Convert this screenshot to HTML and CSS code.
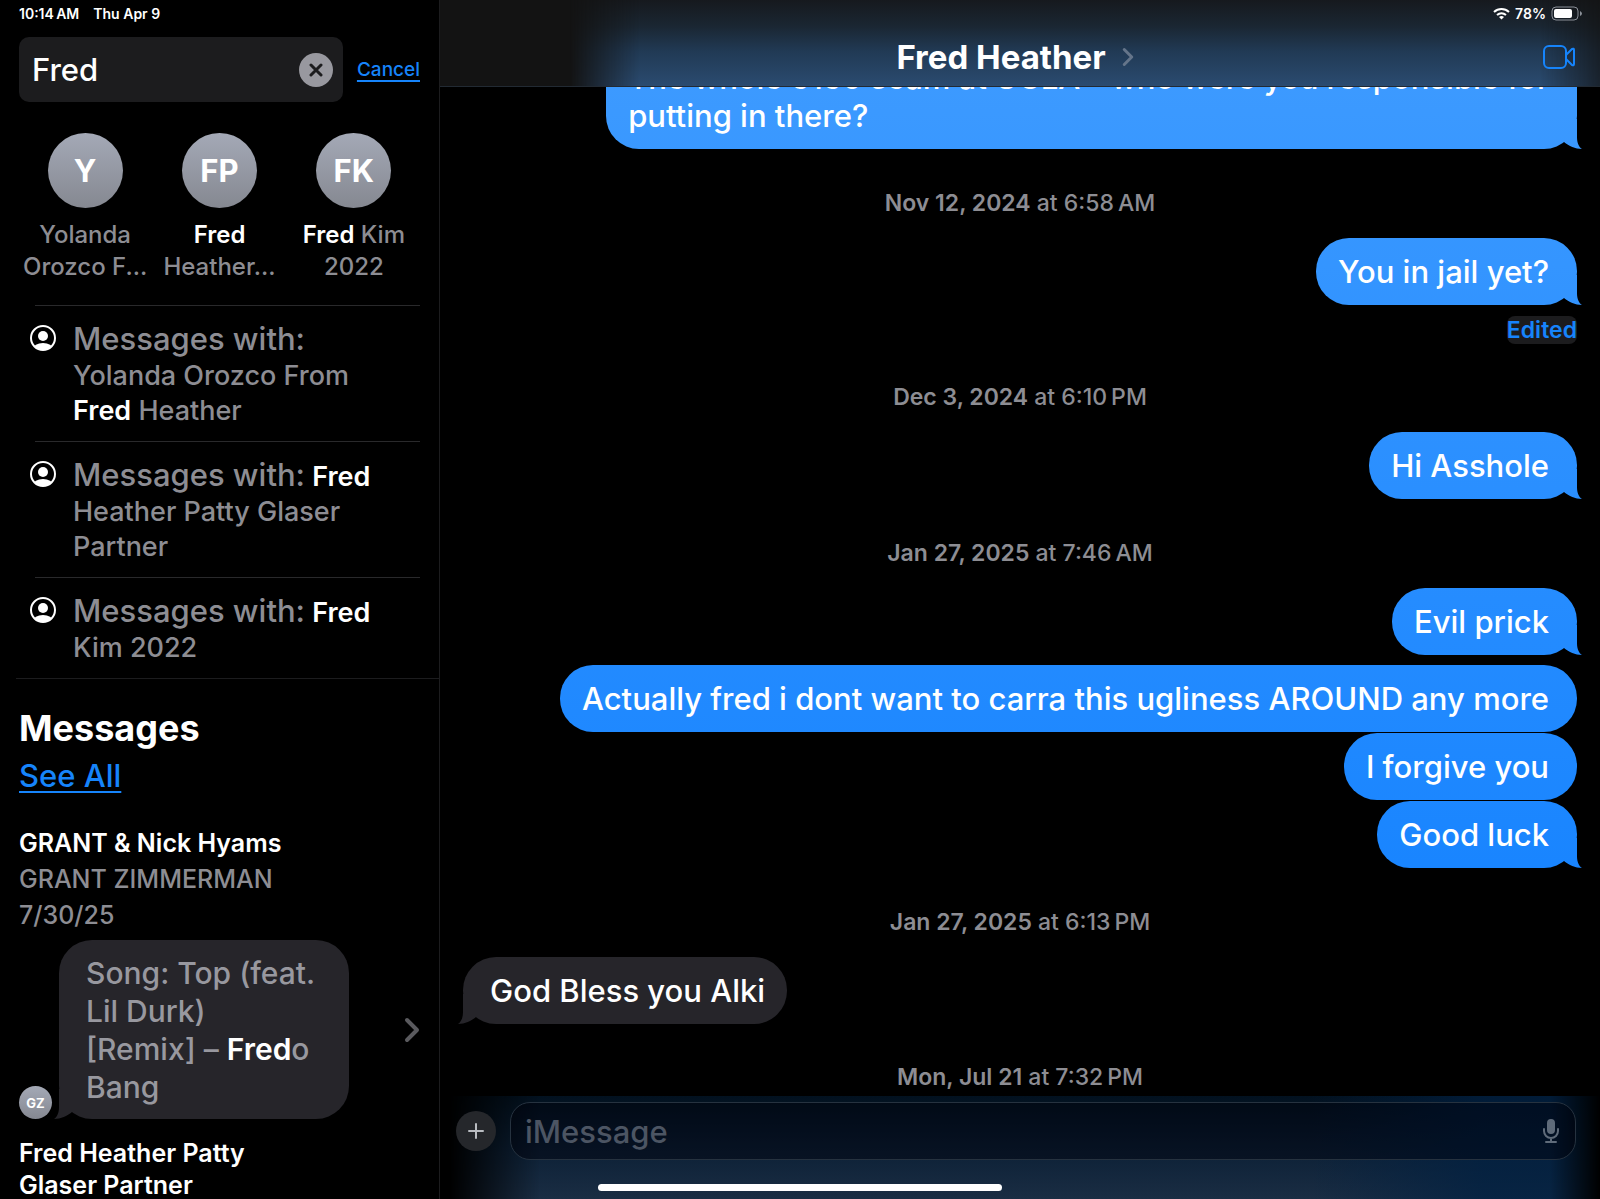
FILE: index.html
```html
<!DOCTYPE html>
<html lang="en">

<head>
    <meta charset="utf-8">
    <title>Messages</title>
    <link rel="stylesheet" href="styles.css">
</head>

<body>
    <!-- shared icons -->
    <svg class="sprite" aria-hidden="true">
        <symbol id="person" viewBox="0 0 26 26">
            <clipPath id="personClip"><circle cx="13" cy="13" r="12" /></clipPath>
            <circle cx="13" cy="13" r="12" fill="none" stroke="currentColor" stroke-width="2" />
            <circle cx="13" cy="11" r="5" fill="currentColor" />
            <ellipse cx="13" cy="24" rx="10" ry="6" fill="currentColor" clip-path="url(#personClip)" />
        </symbol>
        <symbol id="chevron" viewBox="0 0 16 26">
            <path d="M3 3l10 10L3 23" fill="none" stroke="currentColor" stroke-width="4" stroke-linecap="round" stroke-linejoin="round" />
        </symbol>
    </svg>

    <aside class="sidebar">
        <div class="status-bar">
            <span>10:14&thinsp;AM</span>
            <span>Thu Apr 9</span>
        </div>

        <form class="search">
            <div class="search-box">
                <input type="text" class="search-input" value="Fred" aria-label="Search">
                <button type="button" class="clear" aria-label="Clear">
                    <svg width="14" height="14" viewBox="0 0 14 14">
                        <path d="M2 2l10 10M12 2L2 12" stroke="#1c1c1e" stroke-width="3" stroke-linecap="round" />
                    </svg>
                </button>
            </div>
            <a href="#" class="cancel">Cancel</a>
        </form>

        <div class="contacts">
            <div class="contact">
                <div class="avatar">Y</div>
                <p>Yolanda<br>Orozco F...</p>
            </div>
            <div class="contact">
                <div class="avatar">FP</div>
                <p><b>Fred</b><br>Heather...</p>
            </div>
            <div class="contact">
                <div class="avatar">FK</div>
                <p><b>Fred</b> Kim<br>2022</p>
            </div>
        </div>

        <ul class="suggestions">
            <li>
                <svg class="person"><use href="#person" /></svg>
                <p><span class="lead">Messages with:</span><br>Yolanda Orozco From<br><b>Fred</b> Heather</p>
            </li>
            <li>
                <svg class="person"><use href="#person" /></svg>
                <p><span class="lead">Messages with:</span> <b>Fred</b><br>Heather Patty Glaser<br>Partner</p>
            </li>
            <li>
                <svg class="person"><use href="#person" /></svg>
                <p><span class="lead">Messages with:</span> <b>Fred</b><br>Kim 2022</p>
            </li>
        </ul>

        <section class="results">
            <h2>Messages</h2>
            <a href="#" class="see-all">See All</a>

            <article class="result">
                <h3>GRANT &amp; Nick Hyams</h3>
                <p>GRANT ZIMMERMAN</p>
                <p>7/30/25</p>
                <div class="result-row">
                    <div class="avatar small">GZ</div>
                    <div class="bubble received preview">Song: Top (feat.<br>Lil Durk)<br>[Remix] – <b>Fred</b>o<br>Bang</div>
                    <svg class="chevron"><use href="#chevron" /></svg>
                </div>
            </article>

            <article class="result">
                <h3>Fred Heather Patty<br>Glaser Partner</h3>
            </article>
        </section>
    </aside>

    <main class="chat">
        <header class="chat-header">
            <div class="status-bar right">
                <svg width="17" height="13" viewBox="0 0 17 13" fill="none" stroke="#fff" stroke-width="2">
                    <path d="M1 5a11 11 0 0 1 15 0" />
                    <path d="M4 8a7 7 0 0 1 9 0" />
                    <path d="M8.500 12.500L6 10a4 4 0 0 1 5 0z" fill="#fff" stroke="none" />
                </svg>
                <span>78%</span>
                <svg width="31" height="15" viewBox="0 0 31 15">
                    <rect x="1" y="1" width="26" height="13" rx="4" fill="none" stroke="#8b9098" />
                    <rect x="3" y="3" width="18" height="9" rx="2" fill="#fff" />
                    <path d="M29 5v5q2-1 2-2.500T29 5z" fill="#8b9098" />
                </svg>
            </div>
            <div class="title-row">
                <button type="button" class="title">
                    Fred Heather
                    <svg class="title-chevron"><use href="#chevron" /></svg>
                </button>
                <button type="button" class="video" aria-label="FaceTime">
                    <svg width="34" height="24" viewBox="0 0 34 24" fill="none" stroke="#1684fb" stroke-width="2" stroke-linejoin="round">
                        <rect x="2" y="1" width="22" height="22" rx="5" />
                        <path d="M24 10l6-6q2-1 2 1v14q0 2-2 1l-6-6" />
                    </svg>
                </button>
            </div>
        </header>

        <div class="thread">
            <div class="bubble sent tail">The whole 5150 scam at UCLA - who were you responsible for<br>putting in there?</div>
            <time><b>Nov 12, 2024</b> at 6:58&thinsp;AM</time>
            <div class="bubble sent tail">You in jail yet?</div>
            <button type="button" class="edited">Edited</button>
            <time><b>Dec 3, 2024</b> at 6:10&thinsp;PM</time>
            <div class="bubble sent tail">Hi Asshole</div>
            <time><b>Jan 27, 2025</b> at 7:46&thinsp;AM</time>
            <div class="bubble sent tail spaced">Evil prick</div>
            <div class="bubble sent">Actually fred i dont want to carra this ugliness AROUND any more</div>
            <div class="bubble sent">I forgive you</div>
            <div class="bubble sent tail">Good luck</div>
            <time><b>Jan 27, 2025</b> at 6:13&thinsp;PM</time>
            <div class="bubble received">God Bless you Alki</div>
            <time><b>Mon, Jul 21</b> at 7:32&thinsp;PM</time>
        </div>

        <footer class="composer">
            <div class="composer-row">
                <button type="button" class="add" aria-label="Add">
                    <svg width="16" height="16" viewBox="0 0 16 16">
                        <path d="M8 1v14M1 8h14" stroke="#b9bcc1" stroke-width="2" stroke-linecap="round" />
                    </svg>
                </button>
                <div class="message-box">
                    <input type="text" class="message-input" placeholder="iMessage" aria-label="iMessage">
                    <svg width="16" height="24" viewBox="0 0 16 24" fill="none" stroke="#5f6b7a" stroke-width="2" stroke-linecap="round">
                        <rect x="5" y="1" width="6" height="13" rx="3" fill="#5f6b7a" />
                        <path d="M1 10v2a7 7 0 0 0 14 0v-2M8 19v4M3 23h10" />
                    </svg>
                </div>
            </div>
            <div class="home-bar"></div>
        </footer>
    </main>
</body>

</html>
```
FILE: styles.css
```css
* {
    box-sizing: border-box;
}

body {
    display: grid;
    grid-template-columns: 440px 1fr;
    grid-template-rows: 100vh;
    margin: 0;
    background-color: #000;
    color: #fff;
    font-family: Inter, "Liberation Sans", sans-serif;
    font-size: 31px;
    font-weight: 500;
    overflow: hidden;
}

h2,
h3,
p,
ul {
    margin: 0;
    padding: 0;
}

b {
    color: #fff;
    font-weight: 600;
}

button {
    padding: 0;
    border: none;
    background: none;
    color: inherit;
    font: inherit;
    cursor: pointer;
}

input {
    min-width: 0;
    padding: 0;
    border: none;
    outline: none;
    background: none;
    color: #fff;
    font: inherit;
}

a {
    color: #1684fb;
    text-underline-offset: 4px;
    text-decoration-thickness: 2px;
}

.sprite {
    position: absolute;
    width: 0;
    height: 0;
}

.status-bar {
    display: flex;
    gap: 14px;
    align-items: center;
    height: 27px;
    font-size: 14px;
    font-weight: 600;
}

.status-bar.right {
    justify-content: flex-end;
    gap: 5px;
    padding-right: 18px;
}

/* sidebar */
.sidebar {
    border-right: 1px solid #1c1c1e;
    overflow: hidden;
}

.sidebar .status-bar {
    padding-left: 19px;
}

.search {
    display: flex;
    align-items: center;
    gap: 14px;
    margin: 10px 19px 31px;
}

.search-box {
    display: flex;
    flex: 1;
    align-items: center;
    min-width: 0;
    height: 65px;
    padding: 0 10px 0 13px;
    border-radius: 10px;
    background-color: #1c1c1e;
}

.search-input {
    flex: 1;
}

.clear {
    display: flex;
    align-items: center;
    justify-content: center;
    width: 34px;
    height: 34px;
    border-radius: 50%;
    background-color: #98989f;
}

.cancel {
    font-size: 19px;
}

.contacts {
    display: grid;
    grid-template-columns: repeat(3, 1fr);
    padding: 0 18px;
}

.contact {
    color: #8d8d93;
    font-size: 24px;
    line-height: 32px;
    text-align: center;
    white-space: nowrap;
}

.avatar {
    display: flex;
    align-items: center;
    justify-content: center;
    width: 75px;
    height: 75px;
    margin: 0 auto 11px;
    border-radius: 50%;
    background: linear-gradient(#a4a9b6, #858891);
    color: #fff;
    font-size: 31px;
    font-weight: 700;
}

.avatar.small {
    width: 33px;
    height: 33px;
    margin: 0;
    font-size: 13px;
}

.suggestions {
    margin: 22px 0 0 16px;
    border-bottom: 1px solid #1c1c1e;
    list-style: none;
}

.suggestions li {
    display: flex;
    gap: 17px;
    margin: 0 19px;
    padding: 15px 0 13px;
    border-top: 1px solid #29292b;
    color: #8d8d93;
    font-size: 27px;
    line-height: 35px;
    white-space: nowrap;
}

.person {
    width: 26px;
    height: 26px;
    margin: 4px 0 0 -5px;
    color: #fff;
}

.lead {
    font-size: 31px;
}

.results {
    padding: 28px 19px 0;
}

.results h2 {
    font-size: 36px;
    font-weight: 700;
    line-height: 42px;
}

.see-all {
    display: inline-block;
    margin: 8px 0 32px;
    line-height: 38px;
}

.result {
    color: #8d8d93;
    font-size: 25px;
    line-height: 36px;
}

.result h3 {
    margin-bottom: 2px;
    color: #fff;
    font-size: 25px;
    font-weight: 600;
    line-height: 32px;
}

.result-row {
    display: flex;
    align-items: flex-end;
    gap: 7px;
    margin: 7px 0 18px;
}

.chevron {
    align-self: center;
    width: 16px;
    height: 26px;
    margin-left: auto;
    color: #5a5a5e;
}

/* bubbles */
.bubble {
    position: relative;
    align-self: flex-end;
    flex-shrink: 0;
    margin-bottom: 1px;
    padding: 15px 28px 14px 22px;
    border-radius: 33px;
    line-height: 38px;
}

.sent {
    background: linear-gradient(#409cff, #0a7cff) fixed;
}

.received {
    align-self: flex-start;
    margin-bottom: 0;
    padding: 15px 22px 14px 27px;
    background: #26252a;
}

.preview {
    padding: 14px 34px 13px 27px;
    color: #98989f;
    font-size: 30px;
}

.tail::after,
.received::after {
    content: "";
    position: absolute;
    right: -5px;
    bottom: 0;
    width: 20px;
    height: 30px;
    background: inherit;
    clip-path: path("M15 0V18C15 24 17 28 20 30C13 30 7 27 2 23L2 0Z");
}

.received::after {
    right: auto;
    left: -5px;
    transform: scaleX(-1);
}

.spaced {
    margin-bottom: 10px;
}

/* chat */
.chat {
    display: flex;
    flex-direction: column;
    min-width: 0;
}

.chat-header {
    position: relative;
    height: 87px;
    border-bottom: 1px solid #222a33;
    background-color: #131313;
}

/* glow of the blue bubbles behind the bars */
.chat-header::before,
.composer::before {
    content: "";
    position: absolute;
    inset: 0;
    background: linear-gradient(#16191e 0, #1a2632 30%, #213a55 60%, #2b4b70 100%);
    mask-image: linear-gradient(to right, transparent 130px, #000 200px, #000 calc(100% - 60px), rgba(0, 0, 0, 0.3) 100%);
}

.chat-header > *,
.composer > * {
    position: relative;
}

.title-row {
    display: flex;
    align-items: center;
    height: 60px;
    padding-right: 24px;
}

.title {
    display: flex;
    align-items: center;
    justify-content: center;
    flex: 1;
    gap: 16px;
    padding-left: 48px;
    font-size: 33px;
    font-weight: 700;
}

.title-chevron {
    width: 12px;
    height: 20px;
    color: #65758a;
}

.video {
    display: flex;
}

.thread {
    display: flex;
    flex: 1;
    flex-direction: column;
    justify-content: flex-end;
    min-height: 0;
    padding: 0 23px 4px;
    overflow: hidden;
}

.thread time {
    margin: 38px 0 20px;
    color: #8d8d93;
    font-size: 23px;
    line-height: 30px;
    text-align: center;
}

.thread time:last-child {
    margin-bottom: 0;
}

.thread time b {
    color: inherit;
}

.edited {
    align-self: flex-end;
    margin-top: 10px;
    border-radius: 8px;
    background-color: #1c1c1e;
    color: #1684fb;
    font-size: 23px;
    font-weight: 600;
    line-height: 28px;
}

.composer {
    position: relative;
    padding: 6px 24px 8px 16px;
}

.composer::before {
    background:
        linear-gradient(to right, transparent 75%, rgba(0, 32, 66, 0.7) 90%),
        linear-gradient(#02111f, #0c2036 50%, #1a2d43);
    mask-image: linear-gradient(to right, transparent 10px, #000 100px, #000 calc(100% - 50px), transparent 100%);
}

.composer-row {
    display: flex;
    align-items: center;
    gap: 14px;
}

.add {
    display: flex;
    align-items: center;
    justify-content: center;
    width: 40px;
    height: 40px;
    border-radius: 50%;
    background-color: #25272b;
}

.message-box {
    display: flex;
    flex: 1;
    align-items: center;
    height: 58px;
    padding: 0 16px 0 14px;
    border: 1px solid #26323f;
    border-radius: 20px;
    background-color: rgba(0, 0, 8, 0.45);
}

.message-input {
    flex: 1;
}

.message-input::placeholder {
    color: #4c5563;
    opacity: 1;
}

.home-bar {
    width: 404px;
    height: 7px;
    margin: 24px auto 0 142px;
    border-radius: 4px;
    background-color: #fff;
}
```
